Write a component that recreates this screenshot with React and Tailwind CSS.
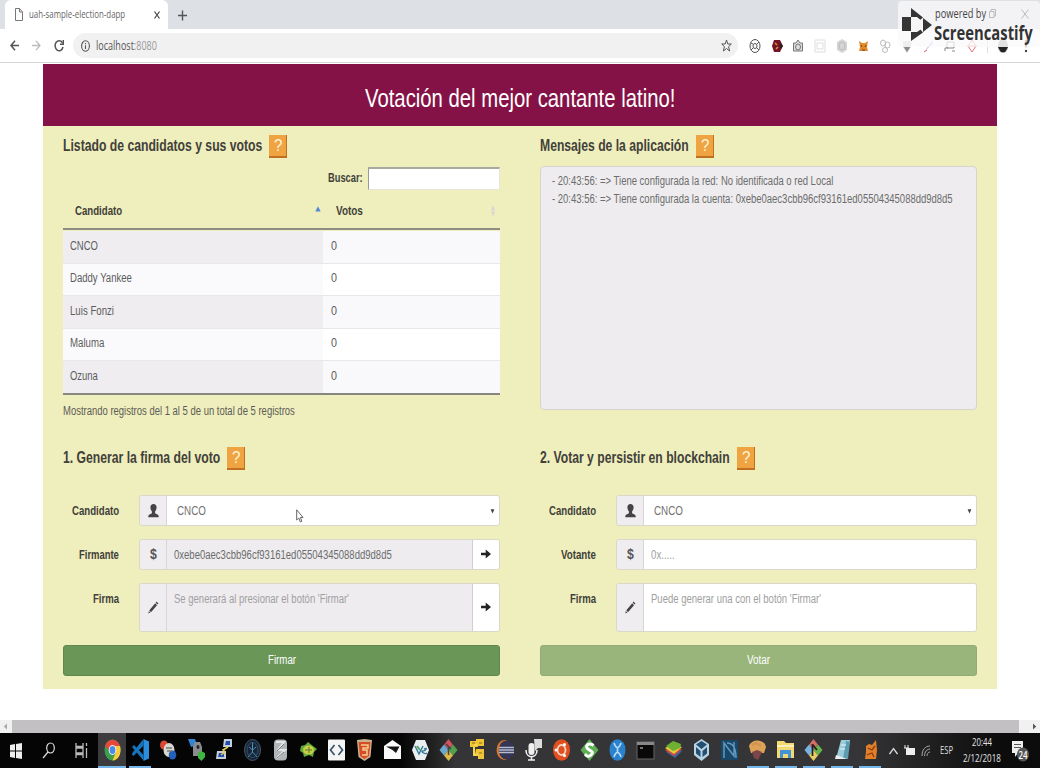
import React, { useLayoutEffect, useRef, useState } from "react";

// Text squeezed horizontally so that it fills exactly w pixels.
function T({ w, className = "", children }) {
  const ref = useRef(null);
  const [s, setS] = useState(1);
  useLayoutEffect(() => {
    setS(w / ref.current.offsetWidth);
  }, [w]);
  return (
    <span className={"inline-block shrink-0 whitespace-nowrap " + className} style={{ width: w }}>
      <span ref={ref} className="inline-block origin-left" style={{ transform: `scaleX(${s})` }}>
        {children}
      </span>
    </span>
  );
}

function Help() {
  return (
    <span className="flex h-[23px] w-[18px] items-center justify-center border-r border-b-2 border-[#c0701f] bg-[#efa441] text-[17px] font-normal leading-none text-[#fff6dc]">
      <T w={8}>?</T>
    </span>
  );
}

function Heading({ w, children }) {
  return (
    <h4 className="flex h-[23px] items-center gap-[7px] text-[16px] font-bold leading-none text-[#41413a]">
      <T w={w} className="pb-[2px]">{children}</T>
      <Help />
    </h4>
  );
}

const UserIcon = () => (
  <svg width="11" height="14" viewBox="0 0 11 14" fill="#444">
    <path d="M5.500 0C3.500 0 2.300 1.500 2.400 3.600 2.500 5.200 3.200 6.700 3.900 7.400V9.300C3.200 10 .5 10.600 .3 12V13.300H10.700V12C10.500 10.600 7.800 10 7.100 9.300V7.400C7.800 6.700 8.500 5.200 8.600 3.600 8.700 1.500 7.500 0 5.500 0Z" />
  </svg>
);
const Pencil = () => (
  <svg width="11" height="13" viewBox="0 0 11 13" fill="#444">
    <path d="M8.600 .6 10.400 2.500 9.500 3.600 7.700 1.700ZM7.200 2.300 9 4.200 3 11.200 1.300 9.300ZM.9 9.900 2.400 11.600 .3 12.600Z" />
  </svg>
);
const Arrow = () => (
  <svg className="mb-[2px]" width="10" height="10" viewBox="0 0 10 10" fill="#222">
    <path d="M0 3.700H4.700V.6L10 5 4.700 9.400V6.300H0Z" />
  </svg>
);
const Dollar = () => <T w={7} className="text-[14px] font-bold text-[#555]">$</T>;

function Field({ label, lw, icon, tall, gray, btn, select, children }) {
  return (
    <div className={"flex " + (tall ? "h-[49px]" : "h-[31px]")}>
      <div className="flex h-[32px] w-[76px] items-center justify-end pr-[20px] text-[12.500px] font-bold text-[#41413a]">
        <T w={lw}>{label}</T>
      </div>
      <div className="flex flex-1 overflow-hidden rounded-[3px] border border-[#d9d8ca]">
        <div className="flex w-[27px] items-center justify-center border-r border-[#d8d6d9] bg-[#efedf0]">{icon}</div>
        <div className={"flex flex-1 justify-between text-[12.500px] " + (gray ? "bg-[#eeecef] " : "bg-white ") + (select ? "pl-[10px]" : "pl-[7px]")}>
          <div className="flex h-[30px] items-center">{children}</div>
          {select && <svg className="mt-[13px] mr-[4px]" width="5" height="5" viewBox="0 0 5 5"><path d="M.6 .3H4.400L2.500 4.400Z" fill="#444" /></svg>}
        </div>
        {btn && <div className="flex w-[27px] items-center justify-center border-l border-[#d0ced1] bg-white"><Arrow /></div>}
      </div>
    </div>
  );
}

const rows = [["CNCO", 28], ["Daddy Yankee", 62], ["Luis Fonzi", 44], ["Maluma", 34], ["Ozuna", 28]];

const S = ({ children }) => <svg width="19" height="24" viewBox="0 0 19 24">{children}</svg>;

const apps = [
  [<S><ellipse cx="9.500" cy="12" rx="8" ry="10.500" fill="#3d9e4d" /><path d="M2 8.500A8 10.500 0 0 1 17 8.500L9.500 8Z" fill="#e6493b" /><path d="M2.300 7.500 7 14 9.500 7Z" fill="#e6493b" /><path d="M9.500 8H17A8 10.500 0 0 1 9.500 22.500L13 14Z" fill="#f9cc3d" /><ellipse cx="9.500" cy="12" rx="3.800" ry="5" fill="#f5f5f5" /><ellipse cx="9.500" cy="12" rx="2.900" ry="3.900" fill="#4a8be8" /></S>, 2],
  [<S><path d="M12.500 1 18 3.500V20.500L12.500 23Z" fill="#2b8ddb" /><path d="M12.500 1 2 14 .8 16.500 2.500 18 12.500 7.500ZM12.500 17 3 7 1 9 12.500 22.500Z" fill="#1674bd" /></S>, 1],
  [<S><ellipse cx="5" cy="7" rx="4" ry="4.500" fill="#d84833" /><ellipse cx="10" cy="12" rx="5.500" ry="7" fill="#d9d8d0" /><ellipse cx="13.500" cy="17" rx="3.800" ry="4.500" fill="#2260bb" /><path d="M7 10H13M8 13H13" stroke="#777" strokeWidth="1.500" /></S>],
  [<S><path d="M1 1H8L10 7 4 9Z" fill="#3484d4" /><path d="M6 8 8 4H13L15 9V18H6Z" fill="#898d90" /><ellipse cx="11" cy="9" rx="1.500" ry="2" fill="#222" /><path d="M14 13 18 15V19L14.500 23 11 20V15Z" fill="#3eb443" /></S>],
  [<S><path d="M9 1H17V9H8Z" fill="#c4cfdb" /><path d="M11 3H15V7H10Z" fill="#244dab" /><path d="M2 13H11V21H1Z" fill="#c4cfdb" /><path d="M4 15H9V19H3Z" fill="#244dab" /><path d="M13 9 8 12 10 14 6 17" stroke="#e6cf43" strokeWidth="1.500" fill="none" /></S>],
  [<S><ellipse cx="9.500" cy="12" rx="8" ry="10.500" fill="#172536" stroke="#45566a" /><path d="M9.500 4V14L5 19M9.500 14 14 19M6 9 9.500 12 13 9" stroke="#4b92b5" fill="none" /><ellipse cx="9.500" cy="12" rx="5.500" ry="7.500" stroke="#31516b" fill="none" /></S>],
  [<S><rect x="3" y="1.500" width="13" height="21" rx="4" fill="#b2b5b8" /><path d="M5 4H13L7 12H14L6 20" stroke="#e3e5e8" strokeWidth="2" fill="none" /><path d="M6 13 13 6M6 20 13 14" stroke="#74777c" /></S>],
  [<S><path d="M2 8 6 7 9 4 14 8 18 11 15 14 14 19 10 17 5 19 4 15 1 13Z" fill="#61a83d" /><ellipse cx="9.500" cy="12" rx="5.500" ry="4.500" fill="#c6cf45" /><path d="M6 12H13M10 9V15" stroke="#5b7d28" /></S>],
  [<S><rect x="1" y="1.500" width="17" height="21" rx="1" fill="#f5f5f3" /><path d="M7.500 7 3.500 12 7.500 17M11.500 7 15.500 12 11.500 17" stroke="#38516f" strokeWidth="1.700" fill="none" /></S>],
  [<S><path d="M2 2 9.500 1 17 2 15.500 19 9.500 23 3.500 19Z" fill="#c9b28e" /><path d="M3.500 4H15.500L14 18 9.500 21 5 18Z" fill="#d74b27" /><path d="M6 7H13V10H8V12H12V17H7" stroke="#f6cf8d" strokeWidth="1.500" fill="none" /></S>],
  [<S><path d="M1 8 9.500 2 18 8V21H1Z" fill="#fafafa" /><path d="M3 8.500H16.500L13 15 9.500 12Z" fill="#161616" /></S>],
  [<S><path d="M5 2H14L18 12 14 22H5L1 12Z" fill="#e9eef1" /><path d="M4 8 8 16 12 8M13 11C17 9 15 13 12 13S14 17 16 15" stroke="#35799b" strokeWidth="1.400" fill="none" /><path d="M6 8 9 12" stroke="#55a565" strokeWidth="2" /></S>],
  [<S><path d="M9.500 1 13.800 6.500 9.500 12 5.200 6.500Z" fill="#d2525c" /><path d="M5 6.500 9.500 12 5 17.500 .5 12Z" fill="#69a8cf" /><path d="M14 6.500 18.500 12 14 17.500 9.500 12Z" fill="#53a14b" /><path d="M9.500 12 14 17.500 9.500 23 5 17.500Z" fill="#ddb94b" /><path d="M7 6 12 11M9.500 8V17" stroke="#444" strokeWidth="1.500" /></S>],
  [<S><path d="M2 3H10V9H2ZM8 1H16V8H8ZM8 11H16V21H10V16H7Z" fill="#f0c535" /><path d="M6 9V17H10M9 7H6" stroke="#f6d555" strokeWidth="2" fill="none" /><path d="M4 5H7M11 5H14M11 15H14" stroke="#8b6b1e" /></S>],
  [<S><ellipse cx="8.500" cy="12" rx="8" ry="10" fill="#d9772e" /><ellipse cx="10.500" cy="12" rx="7.800" ry="9.500" fill="#343653" /><path d="M3 9.500H18M3 12H18M3 14.500H18" stroke="#b4bdd2" strokeWidth="1.700" /></S>],
  [<S><path d="M10 1H18V10H14L11 13Z" fill="#ddd" /><rect x="4.500" y="5" width="6" height="12" rx="3" fill="#f0f0f0" /><path d="M2 12C2 21 13 21 13 12M7.500 19V22M4 22H11" stroke="#eee" strokeWidth="1.600" fill="none" /></S>],
  [<S><ellipse cx="9.500" cy="12" rx="8.500" ry="10.800" fill="#e2501f" /><ellipse cx="9.500" cy="12" rx="4" ry="5" fill="none" stroke="#f6d8ca" strokeWidth="1.800" /><circle cx="4" cy="12" r="1.500" fill="#fff" /><circle cx="12.500" cy="6.500" r="1.500" fill="#fff" /><circle cx="12.500" cy="17.500" r="1.500" fill="#fff" /></S>],
  [<S><path d="M9.500 1 18.500 12 9.500 23 .5 12Z" fill="#5eae54" /><path d="M13.500 7.500C9 4 4 8 8 11S14 14 11 17 6 17 5 16" stroke="#fff" strokeWidth="3" fill="none" /></S>],
  [<S><ellipse cx="9.500" cy="12" rx="8" ry="10.800" fill="#2a82cf" /><path d="M6 5C8 11 11 11 13 5M6 19C8 13 11 13 13 19M9.500 9V15" stroke="#b9dcf5" strokeWidth="1.700" fill="none" /></S>],
  [<S><rect x="1" y="4" width="17" height="17" fill="#090909" stroke="#666" /><rect x="1" y="4" width="17" height="3" fill="#888" /><path d="M4 10H7" stroke="#ddd" /></S>],
  [<S><path d="M2 14 9 10 18 13 11 20Z" fill="#3f64a2" /><path d="M1 12 9 8 18 11 10 18Z" fill="#d2493c" /><path d="M1 10 9 6 18 9 10 16Z" fill="#e3c93c" /><path d="M2 8 9 3 17 6 16 10 9 13Z" fill="#6faf31" /></S>],
  [<S><path d="M9.500 1 17 6V17L9.500 23 2 17V6Z" fill="#b7d4e5" /><path d="M9.500 3 15 6.500 9.500 11 4 6.500ZM4 9 8.500 13V19L4 15.500ZM15 9 10.500 13V19L15 15.500Z" fill="#244f71" /></S>],
  [<S><rect x="1" y="2" width="17" height="20" fill="#194768" /><path d="M4 20V5L14 18V4M7 5C13 5 16 11 16 20" stroke="#6299bd" strokeWidth="1.500" fill="none" /></S>],
  [<S><path d="M1 8C3 1 16 0 18 9L16 15H3Z" fill="#dda158" /><path d="M4 14 9 12 14 14 10 22 6 20Z" fill="#7c4649" /><path d="M4 7 8 5 13 8" stroke="#cf954e" strokeWidth="2" fill="none" /></S>, 1],
  [<S><path d="M1 3H8L10 5H18V20H1Z" fill="#f6d873" /><path d="M1 8H18" stroke="#fff2b6" strokeWidth="2" /><path d="M4 12H15V20H12V16H7V20H4Z" fill="#3f94d8" /></S>, 1],
  [<S><path d="M9.500 1 13.800 6.500 9.500 12 5.200 6.500Z" fill="#d66e65" /><path d="M5 6.500 9.500 12 5 17.500 .5 12Z" fill="#77b4df" /><path d="M14 6.500 18.500 12 14 17.500 9.500 12Z" fill="#69b34f" /><path d="M9.500 12 14 17.500 9.500 23 5 17.500Z" fill="#e8cf63" /><path d="M8.500 6V18M9 7 13 12" stroke="#222" strokeWidth="1.700" /></S>, 1],
  [<S><path d="M8 2H17L14 21H3Z" fill="#9accdc" /><path d="M13 3 17 4 15 21H10Z" fill="#5d9bb2" /><path d="M3 17 14 21H2Z" fill="#eee" /><path d="M8 7H13M7 11H12" stroke="#c9e6ef" strokeWidth="1.500" /></S>, 1],
  [<S><path d="M5 8 8 6 11 7 15 2 16 12 15 21H4L5 14Z" fill="#e28029" /><path d="M7 10 11 12 14 8M6 17 11 15 13 19" stroke="#8c3712" strokeWidth="1.300" fill="none" /></S>, 1],
];

const ext = [
  <g stroke="#555" fill="none"><ellipse cx="7" cy="8" rx="5" ry="6.500" /><ellipse cx="7" cy="8" rx="2" ry="2.500" /><path d="M3 5 5 6M9 10 11 12M11 4 9 6M3 12 5 10" /></g>,
  <g><path d="M4 2H10L13 8 10 14H4L2 8Z" fill="#751426" /><path d="M5 5 7 7M6 11 8 9" stroke="#dc992e" strokeWidth="1.500" /><path d="M10 5 13 8 10 11Z" fill="#222" /></g>,
  <g fill="none" stroke="#777"><path d="M2.500 13V5H5L7 2 9 5H11.500V13Z" fill="#ddd" /><ellipse cx="7" cy="9" rx="2.500" ry="3" /></g>,
  <g fill="none" stroke="#ddd"><path d="M2 2H12V14H2ZM4 5H10V11H4Z" /></g>,
  <g><path d="M7 1 12 4V12L7 15 2 12V4Z" fill="#d5d5d5" /><ellipse cx="7" cy="8" rx="3" ry="4" fill="none" stroke="#bbb" /></g>,
  <g><path d="M3 3 6 5H9L12 3 11 9 12 13H3L4 9Z" fill="#df8d2c" /><path d="M5 7 6 9M10 7 9 9M6 12H9" stroke="#823b1a" /></g>,
  <g fill="none" stroke="#bbb"><ellipse cx="5" cy="5" rx="2.500" ry="3" /><ellipse cx="9.500" cy="7" rx="2.500" ry="3" /><ellipse cx="7" cy="12" rx="2.500" ry="2.500" /></g>,
  <g><path d="M3 3H11V9L7 15 3 9Z" fill="#ccc" /><path d="M4 9H10L7 14Z" fill="#888" /></g>,
  <g><path d="M2 14 11 2 10 6 4 12Z" fill="#c6a9db" /><path d="M2 14 5 12" stroke="#d66" /></g>,
  <g fill="none" stroke="#888"><path d="M4 4H11V10H4ZM2 13V10H5M9 13H12" /></g>,
  <g fill="none" stroke="#e76b73"><path d="M7 2 11 8 7 14 3 8ZM2 8H12" /></g>,
];

export default function App() {
  return (
    <div className="relative flex h-[768px] w-[1040px] flex-col overflow-hidden bg-white font-['Liberation_Sans',sans-serif]">
      <div className="flex h-[29px] shrink-0 bg-[#dde0e5] pl-[5px] font-['Open_Sans',sans-serif]">
        <div className="flex h-[29px] w-[163px] items-center rounded-t-[6px] bg-white pl-[10px] text-[11px] text-[#666]">
          <svg width="8" height="13" viewBox="0 0 8 13" fill="none" stroke="#777"><path d="M.5 .5H4.500L7.500 4V12.500H.5ZM4.500 .5V4H7.500" /></svg>
          <T w={96} className="ml-[6px]">uah-sample-election-dapp</T>
          <svg className="ml-[29px]" width="6" height="8" viewBox="0 0 6 8" stroke="#444" strokeWidth="1.200"><path d="M.5 .5 5.500 7.500M5.500 .5 .5 7.500" /></svg>
        </div>
        <svg className="mt-[10px] ml-[10px]" width="9" height="11" viewBox="0 0 9 11" stroke="#555" strokeWidth="1.400"><path d="M0 5.500H9M4.500 .5V10.500" /></svg>
      </div>
      <div className="flex h-[34px] shrink-0 items-center border-b border-[#d8d5d8] pl-[10px]">
        <svg width="9" height="11" viewBox="0 0 9 11" fill="none" stroke="#555" strokeWidth="1.500"><path d="M9 5.500H1M5 .8 1 5.500 5 10.200" /></svg>
        <svg className="ml-[13px]" width="9" height="11" viewBox="0 0 9 11" fill="none" stroke="#bbb" strokeWidth="1.300"><path d="M0 5.500H8M4 .8 8 5.500 4 10.200" /></svg>
        <svg className="ml-[13px]" width="10" height="13" viewBox="0 0 10 13" fill="none" stroke="#555" strokeWidth="1.500"><path d="M8.500 4A4 5 0 1 0 9 8" /><path d="M9.300 1V5.200H6" /></svg>
        <div className="ml-[9px] flex h-[25px] w-[665px] items-center rounded-full bg-[#f1f1f2] pl-[8px] text-[12px] text-[#555] font-['Open_Sans',sans-serif]">
          <svg width="9" height="12" viewBox="0 0 9 12" fill="none" stroke="#555" strokeWidth="1.100"><ellipse cx="4.500" cy="6" rx="3.900" ry="5.200" /><path d="M4.500 5.200V9M4.500 3V4.200" /></svg>
          <T w={61} className="ml-[6px]">localhost<span className="text-[#999]">:8080</span></T>
          <svg className="ml-[564px]" width="11" height="13" viewBox="0 0 11 13" fill="none" stroke="#555"><path d="M5.500 1 6.800 5H10.300L7.600 7.700 8.600 12 5.500 9.500 2.400 12 3.400 7.700 .7 5H4.200Z" /></svg>
        </div>
        <div className="ml-[10px] flex gap-[7.700px]">
          {ext.map((e, i) => <svg key={i} width="14" height="16" viewBox="0 0 14 16">{e}</svg>)}
        </div>
        <div className="ml-[8px] h-[14px] w-px bg-[#ddd]" />
        <svg className="ml-[9px]" width="12" height="16" viewBox="0 0 12 16"><ellipse cx="6" cy="8" rx="5" ry="7" fill="#999" /><path d="M1 9H11L8 14H4Z" fill="#222" /></svg>
        <svg className="ml-[15px]" width="4" height="14" viewBox="0 0 4 14" fill="#444"><circle cx="2" cy="2" r="1.200" /><circle cx="2" cy="7" r="1.200" /><circle cx="2" cy="12" r="1.200" /></svg>
      </div>

      <main className="mt-px flex h-[625px] w-[954px] shrink-0 flex-col self-start bg-[#efeebd] ml-[43px]">
        <h3 className="flex h-[62px] items-center justify-center pt-[5px] text-[26px] leading-none text-white bg-[#841246]">
          <T w={310}>Votación del mejor cantante latino!</T>
        </h3>
        <div className="flex gap-[40px] px-[20px] pt-[9px]">
          <section className="h-[312px] w-[437px]">
            <Heading w={199}>Listado de candidatos y sus votos</Heading>
            <div className="mt-[9px] flex h-[22px] items-center justify-end gap-[5px] text-[12.500px] font-bold text-[#41413a]">
              <T w={35}>Buscar:</T>
              <div className="h-[23px] w-[132px] border border-t-2 border-[#e8e6dc] border-t-[#aaa9a0] border-l-[#999] bg-white" />
            </div>
            <div className="flex h-[41px] items-center border-b-2 border-[#8e8d82] pt-[5px] pl-[12px] text-[12.500px] font-bold text-[#41413a]">
              <T w={47}>Candidato</T>
              <svg className="ml-[193px] -mt-[5px]" width="6" height="6" viewBox="0 0 6 6"><path d="M3 .3 5.700 5.500H.3Z" fill="#5689d6" /></svg>
              <T w={27} className="ml-[15px]">Votos</T>
              <svg className="ml-[127px]" width="6" height="12" viewBox="0 0 6 12" fill="#d7d6d3"><path d="M3 0 5 5.600H1ZM3 12 5 6.400H1Z" /></svg>
            </div>
            <div className="border-b-2 border-[#88877f]">
              {rows.map(([n, w], i) => (
                <div key={n} className={"flex h-[32.500px] border-t text-[12.500px] text-[#5c5c5c] " + (i ? "border-[#e8e7ea]" : "border-transparent")}>
                  <div className={"flex w-[260px] items-center pb-px pl-[7px] " + (i % 2 ? "bg-[#fafafc]" : "bg-[#efedf0]")}><T w={w}>{n}</T></div>
                  <div className={"flex flex-1 items-center pb-px pl-[8px] " + (i % 2 ? "bg-white" : "bg-[#f9f8fb]")}><T w={6}>0</T></div>
                </div>
              ))}
            </div>
            <div className="mt-[7px] text-[12.500px] text-[#5c5c55]"><T w={232}>Mostrando registros del 1 al 5 de un total de 5 registros</T></div>
          </section>
          <section className="w-[437px]">
            <Heading w={149}>Mensajes de la aplicación</Heading>
            <div className="mt-[8px] h-[244px] rounded-[4px] border border-[#d6d4cd] bg-[#eeecef] pt-[5px] pl-[11px] text-[12.500px] leading-[18px] text-[#6c6c6c]">
              <div className="h-[18px]"><T w={281}>- 20:43:56: =&gt; Tiene configurada la red: No identificada o red Local</T></div>
              <div className="h-[18px]"><T w={401}>- 20:43:56: =&gt; Tiene configurada la cuenta: 0xebe0aec3cbb96cf93161ed05504345088dd9d8d5</T></div>
            </div>
          </section>
        </div>
        <div className="flex gap-[40px] px-[20px]">
          <section className="w-[437px]">
            <Heading w={157}>1. Generar la firma del voto</Heading>
            <div className="mt-[25px] flex flex-col gap-[13px]">
              <Field label="Candidato" lw={47} icon={<UserIcon />} select><T w={29} className="text-[#707070]">CNCO</T></Field>
              <Field label="Firmante" lw={40} icon={<Dollar />} gray btn><T w={218} className="text-[#6c6c6c]">0xebe0aec3cbb96cf93161ed05504345088dd9d8d5</T></Field>
              <Field label="Firma" lw={26} icon={<Pencil />} gray tall btn><T w={175} className="text-[#a0a0a0]">Se generará al presionar el botón 'Firmar'</T></Field>
              <button className="h-[31px] rounded-[3px] border border-[#5f8850] bg-[#6a9658] text-[12.500px] leading-none text-white"><T w={28}>Firmar</T></button>
            </div>
          </section>
          <section className="w-[437px]">
            <Heading w={190}>2. Votar y persistir en blockchain</Heading>
            <div className="mt-[25px] flex flex-col gap-[13px]">
              <Field label="Candidato" lw={47} icon={<UserIcon />} select><T w={29} className="text-[#707070]">CNCO</T></Field>
              <Field label="Votante" lw={35} icon={<Dollar />}><T w={24} className="text-[#a0a0a0]">0x.....</T></Field>
              <Field label="Firma" lw={26} icon={<Pencil />} tall><T w={170} className="text-[#a0a0a0]">Puede generar una con el botón 'Firmar'</T></Field>
              <button className="h-[31px] rounded-[3px] border border-[#93ab76] bg-[#99b57b] text-[12.500px] leading-none text-white"><T w={23}>Votar</T></button>
            </div>
          </section>
        </div>
      </main>

      <div className="mt-[31px] flex h-[13px] shrink-0 items-center justify-between bg-[#f2f1f2] px-[3px]">
        <svg width="5" height="7" viewBox="0 0 5 7"><path d="M4 .5V6.500L.8 3.500Z" fill="#aaa" /></svg>
        <div className="mr-auto ml-[4px] h-full w-[1007px] bg-[#c2c0c2]" />
        <svg width="5" height="7" viewBox="0 0 5 7"><path d="M1 .5V6.500L4.200 3.500Z" fill="#555" /></svg>
      </div>
      <footer className="flex h-[35px] shrink-0 items-center bg-[linear-gradient(90deg,#050505_0,#050505_400px,#353436_455px,#353436_860px,#0c0c0c_1000px)] text-white">
        <div className="flex h-full w-[98px] items-center pl-[10px]">
          <svg width="12" height="16" viewBox="0 0 12 16" fill="#eee"><path d="M0 2 5 1V7.500H0ZM6 1 12 0V7.500H6ZM0 8.500H5V15L0 14ZM6 8.500H12V16L6 15Z" /></svg>
          <svg className="ml-[20px]" width="14" height="17" viewBox="0 0 14 17" fill="none" stroke="#ddd" strokeWidth="1.200"><ellipse cx="8.500" cy="6" rx="3.800" ry="5" /><path d="M6 10 1 16" /></svg>
          <svg className="ml-[19px]" width="13" height="15" viewBox="0 0 13 15" fill="none" stroke="#bbb" strokeWidth="1.300"><path d="M1 0V3.500H8V0M1 15V11.500H8V15M1 5H8V10H1ZM11.500 0V3M11.500 5V15" /></svg>
        </div>
        <div className="flex h-full w-[786px]">
          {apps.map(([icon, on], i) => (
            <div key={i} className={"flex flex-1 flex-col items-center justify-between pt-[5px] " + (on === 2 ? "bg-[#3c3b3d]" : "")}>
              {icon}
              {on && <div className={"h-[2px] bg-[#75b6eb] " + (on === 2 ? "w-full" : "w-[22px]")} />}
            </div>
          ))}
        </div>
        <div className="flex flex-1 items-center pl-[5px] font-['Open_Sans',sans-serif]">
          <svg width="9" height="8" viewBox="0 0 9 8" fill="none" stroke="#ddd" strokeWidth="1.300"><path d="M.5 7 4.500 1.500 8.500 7" /></svg>
          <svg className="ml-[6px]" width="12" height="11" viewBox="0 0 12 11"><path d="M2 3H11V10H2Z" fill="#eee" /><path d="M1 0V3M4 0V3M0 3H5" stroke="#eee" /></svg>
          <svg className="ml-[5px]" width="10" height="12" viewBox="0 0 10 12" fill="none" stroke="#aaa"><path d="M1 11C1 5 4 1 9 1M3.500 11C3.500 7 6 4 9 4M6 11C6 9 7 7 9 7" /></svg>
          <T w={13} className="ml-[9px] text-[10px] text-[#ddd]">ESP</T>
          <div className="-mt-[2px] ml-[10px] flex w-[38px] flex-col items-center text-[10.500px] leading-[16px] text-[#e4e4e4]">
            <T w={20}>20:44</T>
            <T w={38}>2/12/2018</T>
          </div>
          <svg className="ml-[10px]" width="19" height="23" viewBox="0 0 19 23"><path d="M1 2H12V14H7L4 18V14H1Z" fill="#eee" /><path d="M3 5.500H10M3 8.500H10" stroke="#555" /><ellipse cx="12" cy="15.500" rx="6" ry="7" fill="#555" /><text x="7.500" y="19.500" fontSize="10" fontWeight="600" textLength="9" lengthAdjust="spacingAndGlyphs" fill="#fff" fontFamily="Open Sans">24</text></svg>
        </div>
      </footer>

      <div className="absolute top-[1px] left-[898px] flex h-[46px] w-[142px] rounded-[4px] bg-[#fafafb]/75 pl-[4px] font-['Open_Sans',sans-serif] text-[#333]">
        <svg className="mt-[7px]" width="30" height="34" viewBox="0 0 30 34"><path d="M0 9H9V23H0ZM9 0 21 9.500 18 12 14 9H9ZM21 10 30 17 21 24ZM9 24H14L18 21 21 24.500 9 33Z" fill="#353535" /><path d="M9 9H15L21 14V20L15 24H9Z" fill="#f6f6f7" /></svg>
        <div className="pt-[4px]">
          <div className="ml-[3px] flex h-[17px] items-center text-[12px] leading-none text-[#444]">
            <T w={51}>powered by</T>
            <svg className="ml-[3px]" width="7" height="9" viewBox="0 0 7 9" fill="none" stroke="#bbb"><path d="M.5 2.500H5V8.500H.5ZM2 2V.5H6.500V7H5" /></svg>
            <svg className="ml-[25px]" width="8" height="10" viewBox="0 0 8 10" stroke="#bbb"><path d="M.5 .5 7.500 9.500M7.500 .5 .5 9.500" /></svg>
          </div>
          <div className="-mt-px ml-[2px] text-[19px] font-bold leading-[24px]"><T w={99}>Screencastify</T></div>
        </div>
      </div>
      <svg className="absolute top-[509px] left-[296px]" width="8" height="14" viewBox="0 0 8 14"><path d="M.7 .8V11L2.800 9 4.300 13 5.800 12.300 4.400 8.500H7Z" fill="#fff" stroke="#666" /></svg>
    </div>
  );
}
